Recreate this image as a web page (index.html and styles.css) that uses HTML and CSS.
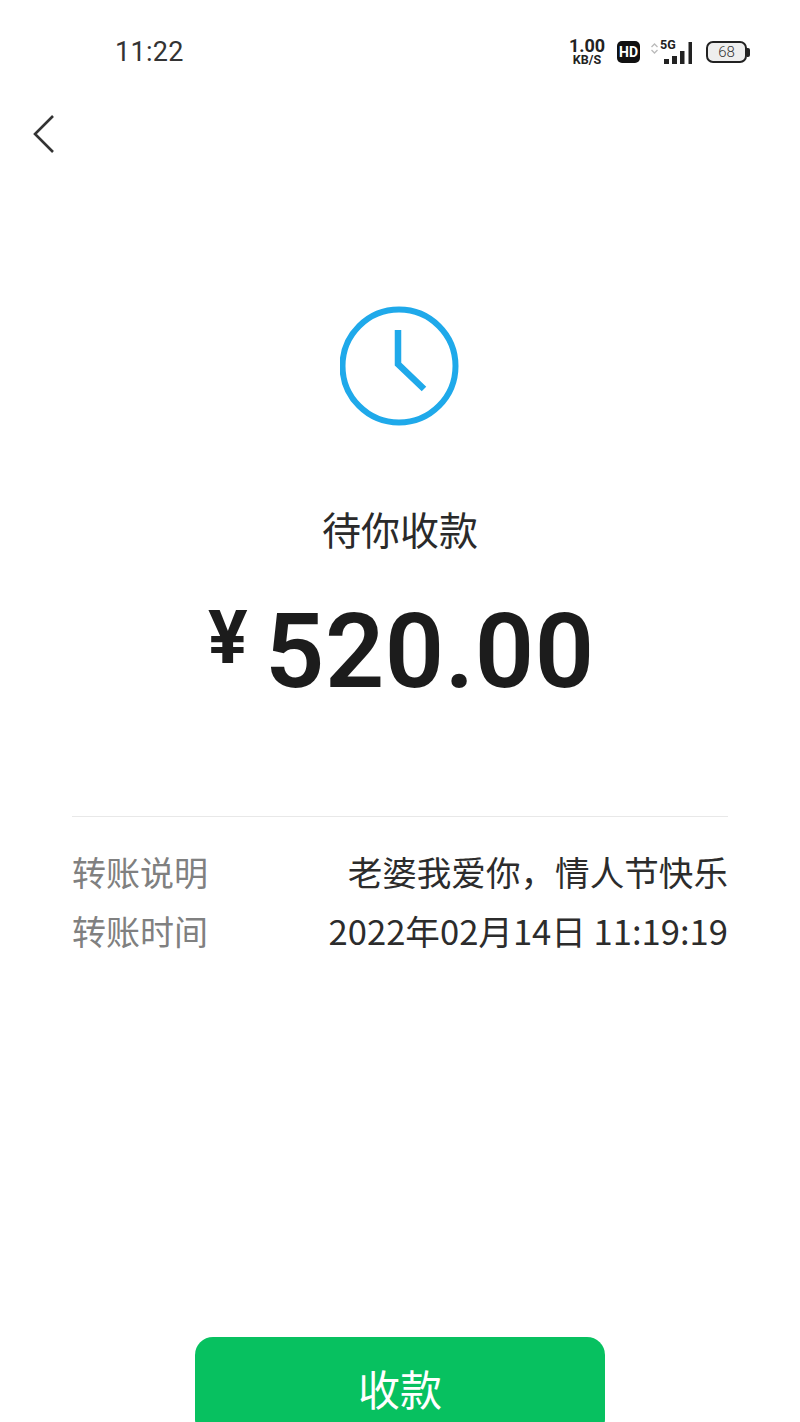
FILE: index.html
```
<!DOCTYPE html>
<html lang="zh">
<head>
<meta charset="utf-8">
<title>待你收款</title>
<link rel="stylesheet" href="styles.css">
</head>
<body>
<div class="page">
  <header class="status">
    <span class="time">11:22</span>
    <div class="indicators">
      <div class="speed"><span class="speed-num">1.00</span><span class="speed-unit">KB/S</span></div>
      <span class="hd">HD</span>
      <svg class="arrows" width="9" height="13" viewBox="0 0 9 13"><path d="M1.500 5 4.500 2 7.500 5M1.500 8 4.500 11 7.500 8" fill="none" stroke="#bbb" stroke-width="1.300"/></svg>
      <div class="signal">
        <span class="fiveg">5G</span>
        <svg width="29" height="22" viewBox="0 0 29 22"><path d="M0 17h5v5H0zM8 14h5v8H8zM16 9h4.500v13H16zM24.500 0H28v22h-3.500z" fill="#222"/></svg>
      </div>
      <div class="battery"><span class="battery-body">68</span><span class="battery-cap"></span></div>
    </div>
  </header>
  <nav class="nav">
    <svg width="24" height="40" viewBox="0 0 24 40"><path d="M21 2 3 20 21 38" fill="none" stroke="#333" stroke-width="2.600"/></svg>
  </nav>
  <main class="main">
    <svg class="clock" width="120" height="120" viewBox="0 0 120 120">
      <circle cx="59" cy="60" r="56.500" fill="none" stroke="#1fa9ea" stroke-width="6"/>
      <path d="M58 24V58L84 83" fill="none" stroke="#1fa9ea" stroke-width="6.500"/>
    </svg>
    <h1 class="title">待你收款</h1>
    <div class="amount"><span class="currency">¥</span><span class="value">520.00</span></div>
    <section class="details">
      <div class="row"><span class="label">转账说明</span><span class="val">老婆我爱你，情人节快乐</span></div>
      <div class="row"><span class="label">转账时间</span><span class="val">2022年02月14日 11:19:19</span></div>
    </section>
  </main>
  <div class="action"><button class="receive">收款</button></div>
</div>
</body>
</html>
```
FILE: styles.css
```
* { box-sizing: border-box; }
html, body { margin: 0; padding: 0; background: #fff; }
body { font-family: "Noto Sans CJK SC", "Noto Sans", sans-serif; color: #222; }
.page { width: 800px; height: 1422px; overflow: hidden; display: flex; flex-direction: column; position: relative; }
.status { height: 100px; display: flex; justify-content: space-between; align-items: flex-start; padding: 35px 50px 0 115px; }
.time { font-family: "Roboto", sans-serif; font-size: 27px; line-height: 34px; color: #333; letter-spacing: 0.3px; }
.indicators { display: flex; align-items: center; height: 34px; }
.speed { display: flex; flex-direction: column; align-items: center; width: 36px; font-family: "Roboto", sans-serif; font-weight: 700; color: #222; }
.speed-num { font-size: 18px; line-height: 15px; }
.speed-unit { font-size: 12.5px; line-height: 13px; }
.hd { margin-left: 12px; width: 23px; height: 22px; background: #111; color: #fff; border-radius: 5px; font: 700 14px/22px "Roboto", sans-serif; text-align: center; }
.arrows { margin-left: 10px; margin-top: -8px; }
.signal { position: relative; width: 33px; height: 24px; margin-left: 1px; display: flex; align-items: flex-end; justify-content: flex-end; }
.signal svg { display: block; }
.fiveg { position: absolute; left: 0; top: -2px; font: 700 12.5px/14px "Roboto", sans-serif; color: #222; background: #fff; }
.battery { margin-left: 13px; display: flex; align-items: center; }
.battery-body { width: 41px; height: 22px; border: 2px solid #222; border-radius: 7px; background: #eee; font: 300 15px/18px "Roboto", sans-serif; text-align: center; color: #333; }
.battery-cap { width: 3px; height: 9px; background: #222; border-radius: 0 2px 2px 0; }
.nav { height: 70px; padding: 14px 0 0 32px; flex: none; }
.nav svg { display: block; }
.main { display: flex; flex-direction: column; align-items: center; flex: 1; padding-top: 136px; }
.clock { display: block; }
.title { margin: 74px 0 0; font-size: 39px; line-height: 56px; font-weight: 400; color: #2a2a2a; }
.amount { display: flex; align-items: flex-start; justify-content: flex-start; height: 110px; margin-top: 41px; width: 400px; padding-left: 8px; color: #1c1c1c; }
.currency { font: 700 74px/70px "Roboto", sans-serif; width: 57px; flex: none; margin-top: 6px; }
.value { font: 600 104px/110px "Roboto", sans-serif; letter-spacing: 0.5px; }
.details { width: 656px; margin-top: 109px; border-top: 1px solid #e8e8e8; padding-top: 29px; display: flex; flex-direction: column; gap: 8px; }
.row { display: flex; justify-content: space-between; height: 51px; align-items: center; font-size: 34px; line-height: 51px; }
.label { color: #808080; }
.val { color: #2c2c2c; font-size: 34.6px; }
.action { position: absolute; left: 195px; top: 1337px; }
.receive { width: 410px; height: 100px; border: 0; border-radius: 18px; background: #07c160; color: #fff; font-family: inherit; font-size: 42px; padding: 0; }
```
